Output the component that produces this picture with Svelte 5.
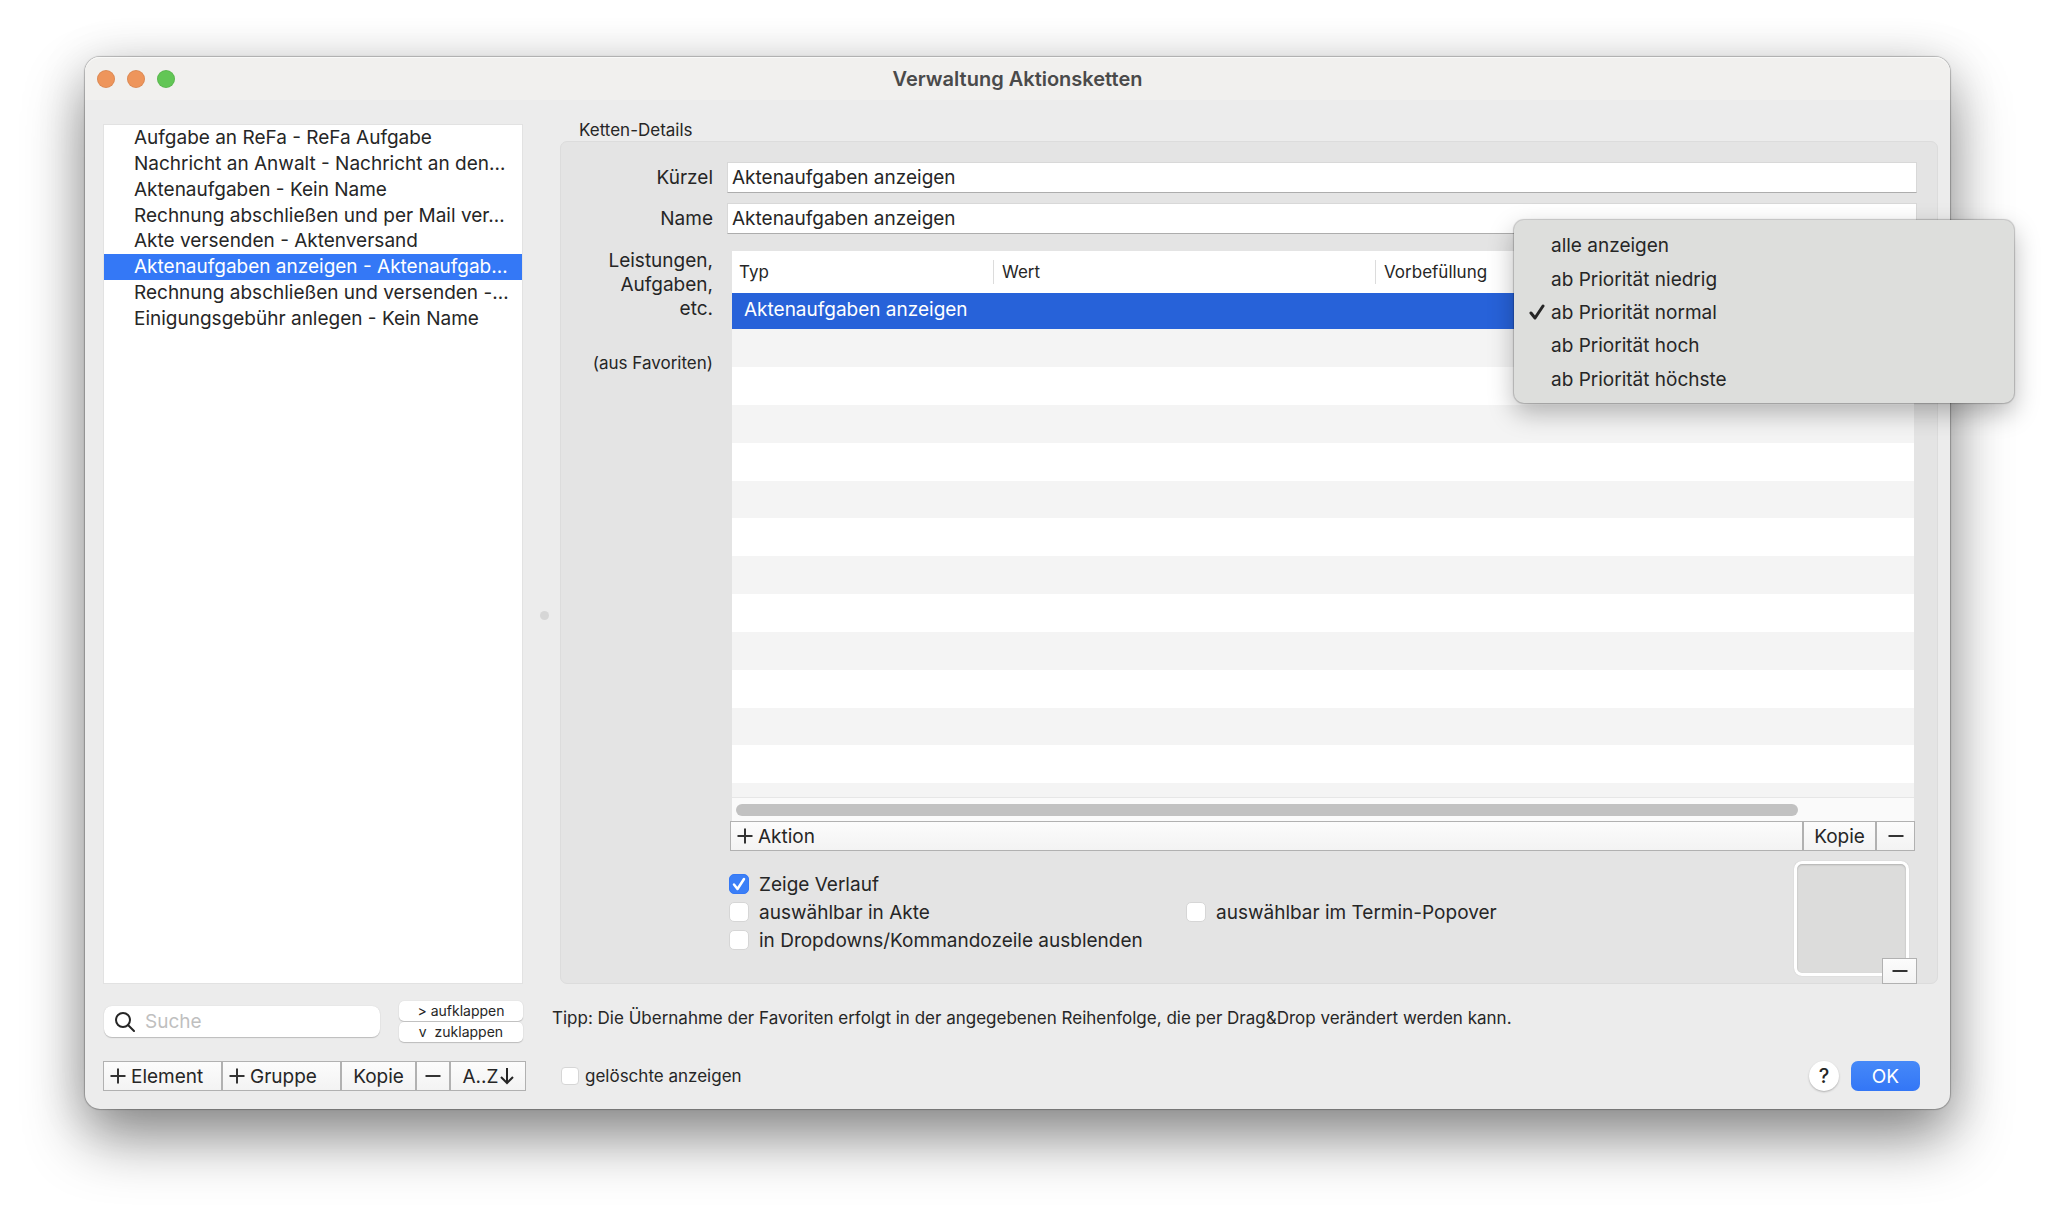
<script>
  const chains = [
    'Aufgabe an ReFa - ReFa Aufgabe',
    'Nachricht an Anwalt - Nachricht an den…',
    'Aktenaufgaben - Kein Name',
    'Rechnung abschließen und per Mail ver…',
    'Akte versenden - Aktenversand',
    'Aktenaufgaben anzeigen - Aktenaufgab…',
    'Rechnung abschließen und versenden -…',
    'Einigungsgebühr anlegen - Kein Name'
  ];
  const priorities = [
    'alle anzeigen',
    'ab Priorität niedrig',
    'ab Priorität normal',
    'ab Priorität hoch',
    'ab Priorität höchste'
  ];
  const emptyRows = Array.from({ length: 13 }, (_, i) => i);

  let selected = $state(5);
  let priority = $state(2);
  let shortName = $state('Aktenaufgaben anzeigen');
  let name = $state('Aktenaufgaben anzeigen');
</script>

{#snippet plus()}
  <svg class="glyph" viewBox="0 0 16 16" aria-hidden="true"><path d="M8 0.5V15.5M0.5 8H15.5" /></svg>
{/snippet}
{#snippet minus()}
  <svg class="glyph" viewBox="0 0 16 16" aria-hidden="true"><path d="M0.5 8H15.5" /></svg>
{/snippet}

<div class="desktop">
  <main class="window">
    <header class="titlebar">
      <div class="lights">
        <button class="light" aria-label="Schließen"></button>
        <button class="light" aria-label="Minimieren"></button>
        <button class="light zoom" aria-label="Vergrößern"></button>
      </div>
      <h1>Verwaltung Aktionsketten</h1>
    </header>

    <div class="body">
      <nav class="list" aria-label="Aktionsketten">
        <div class="list-rows">
          {#each chains as chain, i}
            <button class="chain" class:selected={selected === i} onclick={() => (selected = i)}>{chain}</button>
          {/each}
        </div>
      </nav>

      <div class="splitter"><span></span></div>

      <section class="details">
        <h2>Ketten-Details</h2>
        <div class="group">
          <label class="caption" for="kuerzel">Kürzel</label>
          <input class="field" id="kuerzel" type="text" bind:value={shortName} />
          <label class="caption" for="name">Name</label>
          <input class="field" id="name" type="text" bind:value={name} />

          <div class="caption tall">
            <p>Leistungen,<br />Aufgaben,<br />etc.</p>
            <small>(aus Favoriten)</small>
          </div>
          <div class="table-box">
            <div class="table-view">
              <table>
                <colgroup><col class="c1" /><col class="c2" /><col /></colgroup>
                <thead>
                  <tr><th>Typ</th><th>Wert</th><th>Vorbefüllung</th></tr>
                </thead>
                <tbody>
                  <tr class="active"><td>Aktenaufgaben anzeigen</td><td></td><td></td></tr>
                  {#each emptyRows as row (row)}
                    <tr><td></td><td></td><td></td></tr>
                  {/each}
                </tbody>
              </table>
            </div>
            <div class="scrollbar"><span></span></div>
            <div class="bar">
              <button class="flat grow">{@render plus()}Aktion</button>
              <button class="flat kopie">Kopie</button>
              <button class="flat remove" aria-label="Aktion entfernen">{@render minus()}</button>
            </div>
          </div>

          <div class="options">
            <div class="checks">
              <label class="check"><input type="checkbox" checked />Zeige Verlauf</label>
              <label class="check first"><input type="checkbox" />auswählbar in Akte</label>
              <label class="check"><input type="checkbox" />auswählbar im Termin-Popover</label>
              <label class="check first"><input type="checkbox" />in Dropdowns/Kommandozeile ausblenden</label>
            </div>
            <div class="well">
              <button class="flat clear" aria-label="Bild entfernen">{@render minus()}</button>
            </div>
          </div>
        </div>
      </section>
    </div>

    <footer>
      <div class="search-row">
        <label class="search">
          <svg viewBox="0 0 20 20" aria-hidden="true"><circle cx="8" cy="8" r="7" /><path d="M13 13L19 19" /></svg>
          <input type="search" placeholder="Suche" aria-label="Suche" />
        </label>
        <div class="folds">
          <button class="fold">&gt; aufklappen</button>
          <button class="fold">v&nbsp; zuklappen</button>
        </div>
      </div>
      <p class="tip">Tipp: Die Übernahme der Favoriten erfolgt in der angegebenen Reihenfolge, die per Drag&amp;Drop verändert werden kann.</p>
      <div class="bar tools">
        <button class="flat add">{@render plus()}Element</button>
        <button class="flat add">{@render plus()}Gruppe</button>
        <button class="flat copy">Kopie</button>
        <button class="flat less" aria-label="Element entfernen">{@render minus()}</button>
        <button class="flat sort">A..Z<svg class="arrow" viewBox="0 0 14 18" aria-hidden="true"><path d="M7 1V16M1 10L7 16L13 10" /></svg></button>
      </div>
      <div class="actions">
        <label class="check small"><input type="checkbox" />gelöschte anzeigen</label>
        <button class="help" aria-label="Hilfe">?</button>
        <button class="ok">OK</button>
      </div>
    </footer>
  </main>

  <div class="menu" role="menu">
    {#each priorities as item, i}
      <button role="menuitemradio" aria-checked={priority === i} onclick={() => (priority = i)}>
        <span class="mark">
          {#if priority === i}
            <svg viewBox="0 0 16 16" aria-hidden="true"><path d="M2 9L6 14L14 2" /></svg>
          {/if}
        </span>{item}
      </button>
    {/each}
  </div>
</div>

<style>
  :global(body) { margin: 0; background: #fff; }
  .desktop, .desktop :global(*) { box-sizing: border-box; }
  .desktop {
    position: relative;
    display: flex;
    min-height: 100vh;
    padding: 57px 98px 112px 85px;
    overflow: hidden;
    font-family: Inter, "Liberation Sans", sans-serif;
    font-size: 19px;
    color: #262626;
  }
  button, input { font: inherit; color: inherit; margin: 0; }
  button { border: 0; padding: 0; background: none; }
  h1, h2, p { margin: 0; }

  .window {
    flex: 1;
    min-width: 0;
    display: flex;
    flex-direction: column;
    border-radius: 15px;
    background: #ececec;
    box-shadow: 0 0 1px 1px rgba(0, 0, 0, 0.24), 0 30px 60px rgba(0, 0, 0, 0.42), 0 6px 50px rgba(0, 0, 0, 0.14);
  }
  .titlebar {
    display: grid;
    grid-template-columns: 1fr auto 1fr;
    align-items: center;
    height: 43px;
    padding: 0 12px;
    border-radius: 15px 15px 0 0;
    background: #f1f0ee;
    box-shadow: inset 0 1px 0 #f9f9f8;
  }
  .lights { display: flex; gap: 12px; }
  .light { width: 18px; height: 18px; border-radius: 50%; background: #ee955b; box-shadow: inset 0 0 0 1px rgba(0, 0, 0, 0.08); }
  .zoom { background: #62c655; }
  h1 { font-size: 20px; line-height: 24px; font-weight: 600; color: #4a4a4a; }

  .body { flex: 1; display: flex; padding: 19px 12px 0 18px; }
  .list {
    width: 420px;
    margin: 5px 3px 0 0;
    border: 1px solid #e2e2e2;
    background: #fff;
  }
  .list-rows { display: grid; grid-template-rows: repeat(8, 1fr); height: 206px; }
  .chain {
    padding-left: 30px;
    overflow: hidden;
    text-align: left;
    white-space: nowrap;
    line-height: 25px;
  }
  .chain.selected { background: #3478f6; color: #fff; }
  .splitter { width: 34px; display: flex; align-items: center; justify-content: center; padding-left: 2px; }
  .splitter span { width: 9px; height: 9px; margin-top: 127px; border-radius: 50%; background: #d6d6d6; }

  .details { flex: 1; min-width: 0; display: flex; flex-direction: column; }
  h2 { padding-left: 19px; font-size: 17px; line-height: 22px; font-weight: 400; }
  .group {
    flex: 1;
    display: grid;
    grid-template-columns: 152px 1fr;
    grid-template-rows: 31px 31px 1fr auto;
    column-gap: 14px;
    row-gap: 10px;
    padding: 20px 20px 0 0;
    border: 1px solid #dcdcdc;
    border-radius: 7px;
    background: #e4e4e4;
  }
  .caption { line-height: 31px; text-align: right; }
  .caption.tall { line-height: 24px; padding-top: 5px; }
  .caption small { display: block; margin-top: 30px; font-size: 17px; line-height: 24px; }
  .field {
    width: 100%;
    padding: 0 4px;
    border: 1px solid #d8d8d8;
    border-bottom-color: #adadad;
    border-radius: 0;
    background: #fff;
    outline: 0;
  }

  .table-box { display: flex; flex-direction: column; min-width: 0; padding: 7px 2px 0 3px; }
  .table-view { flex: 1 1 0; overflow: hidden; margin: 0 1px 0 2px; background: #fff; }
  table { width: 100%; border-collapse: collapse; table-layout: fixed; }
  .c1 { width: 261px; }
  .c2 { width: 382px; }
  th {
    height: 42px;
    padding: 0 0 0 9px;
    text-align: left;
    font-size: 17px;
    font-weight: 400;
    background: linear-gradient(#dcdcdc, #dcdcdc) 0 50% / 1px 24px no-repeat;
  }
  th:first-child { padding-left: 7px; background: none; }
  td { padding: 0; height: 38px; }
  tr:nth-child(6n) td { height: 37px; }
  tbody tr:nth-child(even) { background: #f4f4f4; }
  tbody .active td { height: 36px; padding: 0 0 3px 12px; background: #2762d9; color: #fff; white-space: nowrap; }
  .scrollbar { height: 24px; margin: 0 1px 0 2px; padding: 6px 116px 6px 4px; border-top: 1px solid #e6e6e6; background: #fafafa; }
  .scrollbar span { display: block; height: 12px; border-radius: 6px; background: #c1c1c1; }

  .bar { display: flex; height: 30px; }
  .flat {
    display: flex;
    align-items: center;
    justify-content: center;
    border: 1px solid #b1b1b1;
    background: linear-gradient(#fcfcfc, #f3f3f3);
    white-space: nowrap;
  }
  .glyph { width: 16px; height: 16px; flex: none; fill: none; stroke: #333; stroke-width: 2; }
  .grow { flex: 1; justify-content: flex-start; padding-left: 6px; gap: 5px; }
  .kopie { width: 73px; }
  .remove { width: 39px; }

  .options { grid-column: 2; display: flex; justify-content: space-between; height: 122px; }
  .checks { display: grid; grid-template-columns: 457px auto; grid-auto-rows: 28px; align-content: start; padding: 9px 0 0 2px; }
  .first { grid-column: 1; }
  .check { display: flex; align-items: center; gap: 10px; white-space: nowrap; }
  .check input {
    appearance: none;
    flex: none;
    width: 20px;
    height: 20px;
    border: 1px solid #d6d6d6;
    border-radius: 5px;
    background: #fff;
  }
  .check input:checked {
    border-color: #3478f6;
    background: #3b7ff7 url("data:image/svg+xml,%3Csvg xmlns='http://www.w3.org/2000/svg' viewBox='0 0 18 18'%3E%3Cpath d='M4 9.500L7.500 14L14 4' fill='none' stroke='white' stroke-width='2.500' stroke-linecap='round' stroke-linejoin='round'/%3E%3C/svg%3E");
  }
  .well {
    position: relative;
    width: 115px;
    height: 115px;
    margin-right: 8px;
    border: 3px solid #fff;
    border-radius: 8px;
    background: #dcdcdb;
    box-shadow: 0 0 1px #bbb, inset 0 1px 2px rgba(0, 0, 0, 0.2);
  }
  .clear { position: absolute; right: -11px; bottom: -11px; width: 35px; height: 26px; }

  footer {
    display: grid;
    grid-template-columns: 423px 1fr;
    grid-template-rows: 41px 30px;
    row-gap: 19px;
    padding: 17px 30px 18px 18px;
  }
  .search-row { display: flex; align-items: center; justify-content: space-between; padding: 0 3px 0 1px; }
  .search {
    display: flex;
    align-items: center;
    gap: 10px;
    width: 276px;
    height: 31px;
    padding: 0 11px;
    border-radius: 8px;
    background: #fff;
    box-shadow: 0 1px 1px #bcbcbc, 0 0 1px #ccc;
  }
  .search svg { width: 20px; height: 20px; flex: none; fill: none; stroke: #262626; stroke-width: 2; stroke-linecap: round; }
  .search input { flex: 1; min-width: 0; padding: 0; border: 0; outline: 0; background: none; }
  .search input::placeholder { color: #bfbfbf; opacity: 1; }
  .folds { display: flex; flex-direction: column; gap: 1px; width: 124px; }
  .fold { height: 20px; border-radius: 5px; background: #fff; box-shadow: 0 1px 1px #bcbcbc, 0 0 1px #ccc; font-size: 14px; line-height: 18px; }
  .tip { padding-left: 26px; font-size: 17px; line-height: 34px; white-space: nowrap; }
  .add { width: 119px; padding-left: 6px; gap: 5px; justify-content: flex-start; }
  .copy { width: 75px; }
  .less { width: 34px; }
  .sort { flex: 1; }
  .arrow { width: 14px; height: 18px; margin-left: 1px; fill: none; stroke: #262626; stroke-width: 2; }
  .actions { display: flex; align-items: center; padding-left: 35px; }
  .small { flex: 1; gap: 6px; font-size: 17px; }
  .small input { width: 18px; height: 18px; border-radius: 4px; }
  .help { width: 30px; height: 30px; margin-right: 12px; border-radius: 50%; background: #fff; box-shadow: 0 1px 2px #b0b0b0; font-size: 20px; font-weight: 500; }
  .ok { width: 69px; height: 30px; border-radius: 7px; background: linear-gradient(#4689f8, #3376f6); color: #fff; }

  .menu {
    position: absolute;
    top: 220px;
    right: 34px;
    width: 500px;
    height: 183px;
    display: grid;
    grid-template-rows: repeat(5, 1fr);
    padding: 9px 0 7px 13px;
    border-radius: 10px;
    background: #dddedc;
    box-shadow: 0 0 1px 1px rgba(0, 0, 0, 0.2), 0 10px 26px rgba(0, 0, 0, 0.28);
  }
  .menu button { display: flex; align-items: center; }
  .mark { width: 24px; height: 16px; }
  .mark svg { display: block; width: 20px; height: 16px; fill: none; stroke: #262626; stroke-width: 3; stroke-linecap: round; stroke-linejoin: round; }
</style>
